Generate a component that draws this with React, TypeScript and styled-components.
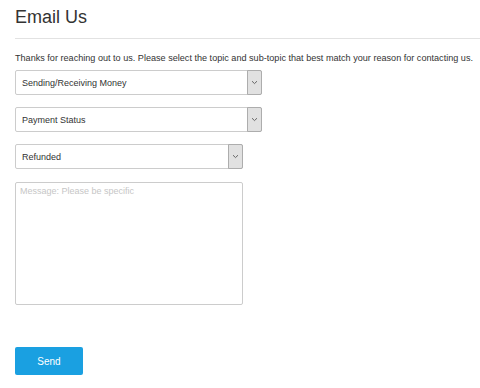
import React from 'react'
import styled, { createGlobalStyle } from 'styled-components'

const GlobalStyle = createGlobalStyle`
  html, body {
    margin: 0;
    padding: 0;
    background: #ffffff;
  }
  body {
    font-family: "Liberation Sans", Arial, sans-serif;
    color: #333333;
  }
`

const Page = styled.div`
  width: 480px;
  height: 388px;
  padding: 5px 0 0 15px;
  box-sizing: border-box;
  overflow: hidden;
`

const Title = styled.h1`
  margin: 0;
  font-size: 18px;
  font-weight: normal;
  line-height: 24px;
  color: #333333;
`

const Divider = styled.hr`
  margin: 9px 0 0 0;
  border: 0;
  border-top: 1px solid #e2e2e2;
`

const Intro = styled.p`
  margin: 13px 0 0 0;
  font-size: 9.1px;
  line-height: 12px;
  color: #333333;
  white-space: nowrap;
`

const Form = styled.form`
  display: flex;
  flex-direction: column;
  align-items: flex-start;
  margin-top: 6px;
`

const SelectBox = styled.div<{ width: number; gap: number }>`
  display: flex;
  align-items: stretch;
  width: ${(props) => props.width}px;
  height: 25px;
  margin-top: ${(props) => props.gap}px;
  border: 1px solid #cccccc;
  border-radius: 2px;
  box-sizing: border-box;
  background: #ffffff;
`

const SelectValue = styled.span`
  flex: 1;
  display: flex;
  align-items: center;
  padding-left: 6px;
  font-size: 9px;
  color: #333333;
`

const Arrow = styled.span`
  width: 13px;
  display: flex;
  align-items: center;
  justify-content: center;
  margin: -1px -1px -1px 0;
  background: #e1e1e1;
  border: 1px solid #adadad;
  border-radius: 0 2px 2px 0;

  svg {
    display: block;
  }
`

const Message = styled.textarea`
  width: 228px;
  height: 123px;
  margin-top: 13px;
  padding: 3px 4px;
  box-sizing: border-box;
  border: 1px solid #cccccc;
  border-radius: 2px;
  resize: none;
  font-family: "Liberation Sans", Arial, sans-serif;
  font-size: 9px;
  color: #333333;
  outline: none;

  &::placeholder {
    color: #c6c6c6;
  }
`

const SendButton = styled.button`
  width: 68px;
  height: 28px;
  margin-top: 42px;
  border: 0;
  border-radius: 2px;
  background: #1aa0e1;
  color: #ffffff;
  font-family: "Liberation Sans", Arial, sans-serif;
  font-size: 10px;
  cursor: pointer;
`

const Chevron = () => (
  <svg width="7" height="5" viewBox="0 0 7 5">
    <path d="M1 1.2 L3.5 3.6 L6 1.2" fill="none" stroke="#666" strokeWidth="1" />
  </svg>
)

const Select = ({ value, width, gap }: { value: string; width: number; gap: number }) => (
  <SelectBox width={width} gap={gap}>
    <SelectValue>{value}</SelectValue>
    <Arrow>
      <Chevron />
    </Arrow>
  </SelectBox>
)

export default function App() {
  return (
    <>
      <GlobalStyle />
      <Page>
        <Title>Email Us</Title>
        <Divider />
        <Intro>
          Thanks for reaching out to us. Please select the topic and sub-topic that best match your reason for contacting us.
        </Intro>
        <Form onSubmit={(e) => e.preventDefault()}>
          <Select value="Sending/Receiving Money" width={247} gap={0} />
          <Select value="Payment Status" width={247} gap={12} />
          <Select value="Refunded" width={228} gap={12} />
          <Message placeholder="Message: Please be specific" />
          <SendButton type="submit">Send</SendButton>
        </Form>
      </Page>
    </>
  )
}
